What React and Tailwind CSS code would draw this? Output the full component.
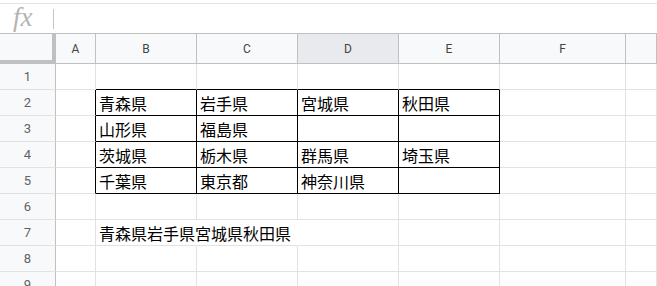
import React from 'react';

const cols = ['A', 'B', 'C', 'D', 'E', 'F', ''];

const data = {
  2: ['', '青森県', '岩手県', '宮城県', '秋田県', '', ''],
  3: ['', '山形県', '福島県', '', '', '', ''],
  4: ['', '茨城県', '栃木県', '群馬県', '埼玉県', '', ''],
  5: ['', '千葉県', '東京都', '神奈川県', '', '', ''],
};

const rows = [1, 2, 3, 4, 5, 6, 7, 8, 9];

// which cells get a black edge (the bordered table B2:E5)
const inTable = (r, c) => r >= 2 && r <= 5 && c >= 1 && c <= 4;

const cellClass = (r, c) => {
  let right = 'border-r-[#e2e2e3]';
  let bottom = 'border-b-[#e2e2e3]';
  if (inTable(r, c) || inTable(r, c + 1)) right = 'border-r-black';
  if (inTable(r, c) || inTable(r + 1, c)) bottom = 'border-b-black';
  // row 7 text overflows across B..D
  if (r === 7 && (c === 1 || c === 2)) right = 'border-r-transparent';
  return `relative h-[26px] border-r border-b ${right} ${bottom}`;
};

export default function App() {
  return (
    <div className="w-[657px] h-[286px] overflow-hidden bg-white font-['Roboto','Liberation_Sans',sans-serif]">
      {/* formula bar */}
      <div className="h-[34px] pt-[3px]">
        <div className="h-[31px] border-t border-b border-t-[#e2e2e3] border-b-[#c0c0c0] flex items-center">
          <span className="ml-[13px] w-[26px] font-['Liberation_Serif',serif] italic text-[27px] leading-none text-[#b4b4b4] -mt-[3px]">
            fx
          </span>
          <span className="ml-[14px] w-px h-[20px] bg-[#c4c4c4]" />
        </div>
      </div>

      <div className="grid grid-cols-[56px_40px_101px_101px_101px_101px_126px_1fr]">
        {/* header row */}
        <div className="h-[30px] bg-[#f8f9fa] border-r-4 border-b-4 border-[#c0c0c0]" />
        {cols.map((c, i) => (
          <div
            key={'h' + i}
            className={`h-[30px] flex items-center justify-center text-[12px] text-[#444] border-r border-b border-[#c0c0c0] ${
              c === 'D' ? 'bg-[#e8eaed]' : 'bg-[#f8f9fa]'
            }`}
          >
            {c}
          </div>
        ))}

        {rows.map((r) => (
          <React.Fragment key={r}>
            <div className="h-[26px] bg-[#f8f9fa] border-r border-b border-r-[#c0c0c0] border-b-[#e2e2e3] flex items-center justify-center text-[13px] text-[#5f6368]">
              {r}
            </div>
            {cols.map((_, c) => (
              <div key={c} className={cellClass(r, c)}>
                {data[r] && data[r][c] && (
                  <span className="absolute left-[3px] bottom-[2px] text-[16px] leading-[20px] text-black whitespace-nowrap font-['Noto_Sans_CJK_JP',sans-serif]">
                    {data[r][c]}
                  </span>
                )}
                {r === 7 && c === 1 && (
                  <span className="absolute left-[3px] bottom-[2px] z-10 text-[16px] leading-[20px] text-black whitespace-nowrap font-['Noto_Sans_CJK_JP',sans-serif]">
                    青森県岩手県宮城県秋田県
                  </span>
                )}
              </div>
            ))}
          </React.Fragment>
        ))}
      </div>
    </div>
  );
}
